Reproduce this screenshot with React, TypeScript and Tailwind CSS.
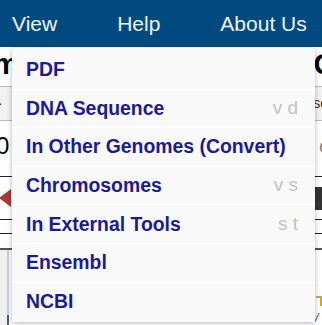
import React from 'react'

const items: { label: string; key?: string }[] = [
  { label: 'PDF' },
  { label: 'DNA Sequence', key: 'v d' },
  { label: 'In Other Genomes (Convert)' },
  { label: 'Chromosomes', key: 'v s' },
  { label: 'In External Tools', key: 's t' },
  { label: 'Ensembl' },
  { label: 'NCBI' },
]

function NavBar() {
  return (
    <div className="h-[47px] bg-[#004a80] flex items-center text-[21px] text-[#f2f2f2]">
      <span className="ml-[12px]">View</span>
      <span className="ml-[60px]">Help</span>
      <span className="ml-[60px]">About Us</span>
    </div>
  )
}

// the page behind the open menu, only its edges show
function PageBehind() {
  return (
    <div className="relative h-[278px] overflow-hidden bg-white">
      <div className="h-[39px] flex justify-between items-end text-[29px] font-bold text-black leading-none pb-[7px]">
        <span className="-ml-[7px]">m</span>
        <span className="-mr-[14px]">G</span>
      </div>
      <div className="h-[34px] border-t border-[#bbb] bg-[#f1f1f1] flex justify-between items-center text-[14px] text-[#333]">
        <span className="ml-[-2px]">·</span>
        <span className="-mr-[6px]">se</span>
      </div>
      <div className="h-[56px] border-t border-[#bbb] flex justify-between items-center text-[24px] text-black pb-[6px]">
        <span className="-ml-[4px]">0</span>
        <span className="-mr-[8px] text-[#888] text-[20px]">e</span>
      </div>
      <div className="h-[43px] border-t border-[#222] flex justify-between items-center">
        <div className="w-0 h-0 border-y-[9px] border-y-transparent border-r-[12px] border-r-[#a8393a] -ml-[1px]" />
        <div className="w-[8px] h-[23px] bg-[#333]" />
      </div>
      <div className="h-[14px] border-t border-[#222]" />
      <div className="h-[15px] border-t border-[#222]" />
      <div className="flex h-[77px] border-t-2 border-[#555]">
        <div className="w-[7px] bg-[#efefef]" />
        <div className="w-[2px] flex flex-col">
          <div className="flex-1 bg-[#c9c9e2]" />
          <div className="h-[10px] bg-[#55558c]" />
        </div>
        <div className="flex-1" />
        <div className="w-[6px] flex flex-col pt-[46px]">
          <div className="h-[10px] border-t-2 border-r-2 border-[#c2a743]" />
          <span className="mt-[6px] text-[12px] italic text-[#3b3b9a] leading-none -ml-[1px]">/</span>
        </div>
      </div>
    </div>
  )
}

function ViewMenu() {
  return (
    <div className="absolute left-[12px] top-[48px] w-[303px] bg-[#f9f9f9] shadow-[0_1px_5px_rgba(0,0,0,0.3)] pt-[2px] pb-[2px]">
      {items.map((it, i) => (
        <div
          key={it.label}
          className={`h-[38.6px] flex items-center justify-between pl-[14px] pr-[17px] ${
            i > 0 ? 'border-t border-white' : ''
          }`}
        >
          <span className="text-[19.4px] font-bold text-[#1b1b98]">{it.label}</span>
          {it.key && <span className="text-[19px] text-[#c2c2c2]">{it.key}</span>}
        </div>
      ))}
    </div>
  )
}

export default function App() {
  return (
    <div
      className="relative w-[322px] h-[325px] overflow-hidden bg-white"
      style={{ fontFamily: '"Liberation Sans", Arial, sans-serif' }}
    >
      <NavBar />
      <PageBehind />
      <ViewMenu />
    </div>
  )
}
